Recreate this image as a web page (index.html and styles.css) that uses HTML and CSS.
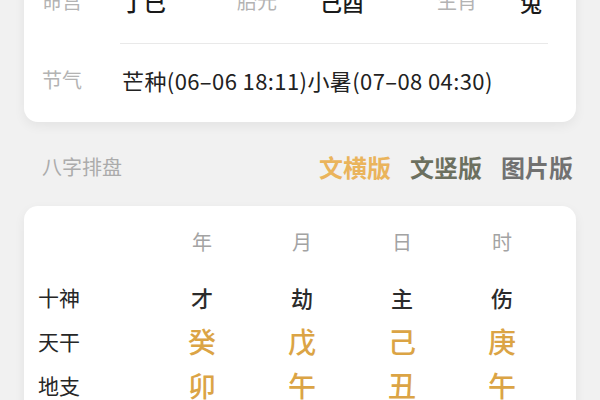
FILE: index.html
```html
<!DOCTYPE html>
<html lang="zh">
<head>
<meta charset="utf-8">
<title>八字排盘</title>
<link rel="stylesheet" href="styles.css">
</head>
<body>
<div class="page">
  <section class="card info-card">
    <div class="info-row">
      <span class="lbl">命宫</span><span class="val">丁巳</span>
      <span class="lbl">胎元</span><span class="val">己酉</span>
      <span class="lbl">生肖</span><span class="val">兔</span>
    </div>
    <div class="divider"></div>
    <div class="jq-row">
      <span class="lbl">节气</span><span class="jq">芒种(06–06 18:11)小暑(07–08 04:30)</span>
    </div>
  </section>

  <div class="section-head">
    <span class="section-title">八字排盘</span>
    <div class="tabs">
      <span class="tab tab-active">文横版</span>
      <span class="tab tab-vert">文竖版</span>
      <span class="tab tab-pic">图片版</span>
    </div>
  </div>

  <section class="card pan-card">
    <div class="pan-grid">
      <span></span><span class="col-h">年</span><span class="col-h">月</span><span class="col-h">日</span><span class="col-h">时</span>
    </div>
    <div class="pan-grid rows">
      <span class="row-lbl">十神</span><span class="shen">才</span><span class="shen">劫</span><span class="shen">主</span><span class="shen">伤</span>
      <span class="row-lbl">天干</span><span class="gz">癸</span><span class="gz">戊</span><span class="gz">己</span><span class="gz">庚</span>
      <span class="row-lbl">地支</span><span class="gz">卯</span><span class="gz">午</span><span class="gz">丑</span><span class="gz">午</span>
    </div>
  </section>
</div>
</body>
</html>
```

FILE: styles.css
```css
html, body {
  margin: 0;
  padding: 0;
  background: #f1f1f1;
  font-family: "Noto Sans CJK SC", "Noto Sans", sans-serif;
  overflow: hidden;
}

.page {
  padding: 0 24px;
}

.card {
  background: #ffffff;
  border-radius: 14px;
  box-shadow: 0 4px 12px rgba(0, 0, 0, 0.06);
}

.info-card {
  margin-top: -40px;
  padding: 0 28px 0 18px;
}

.info-row {
  display: grid;
  grid-template-columns: 80px 115px 83px 117px 83px auto;
  align-items: center;
  padding: 29px 0 30px;
  line-height: 24px;
}

.lbl {
  font-size: 20px;
  color: #b3b3b3;
}

.val {
  font-size: 22px;
  color: #1a1a1a;
  font-weight: 500;
}

.divider {
  height: 1px;
  background: #e9e9e9;
  margin-left: 78px;
}

.jq-row {
  display: grid;
  grid-template-columns: 80px auto;
  align-items: center;
  padding: 24px 0 30px;
  line-height: 24px;
}

.jq {
  font-size: 22px;
  letter-spacing: 0.4px;
  color: #222222;
}

.section-head {
  display: flex;
  justify-content: space-between;
  align-items: center;
  padding: 30px 3px 24px 18px;
  line-height: 30px;
}

.section-title {
  font-size: 20px;
  color: #ababab;
}

.tabs {
  display: flex;
  gap: 19px;
}

.tab {
  font-size: 24px;
  font-weight: 700;
}

.tab-active { color: #eab45c; }
.tab-vert { color: #6c705f; }
.tab-pic { color: #717171; }

.pan-card {
  padding: 22px 23px 20px 14px;
}

.pan-grid {
  display: grid;
  grid-template-columns: 114px repeat(4, 100px);
  align-items: center;
}

.col-h {
  text-align: center;
  font-size: 20px;
  line-height: 28px;
  color: #a3a3a3;
}

.rows {
  margin-top: 19px;
  grid-auto-rows: 44px;
}

.row-lbl {
  font-size: 21px;
  color: #262626;
}

.shen {
  text-align: center;
  font-size: 22px;
  font-weight: 500;
  color: #2b2b2b;
}

.gz {
  text-align: center;
  font-size: 28px;
  font-weight: 500;
  color: #dba445;
}
```
